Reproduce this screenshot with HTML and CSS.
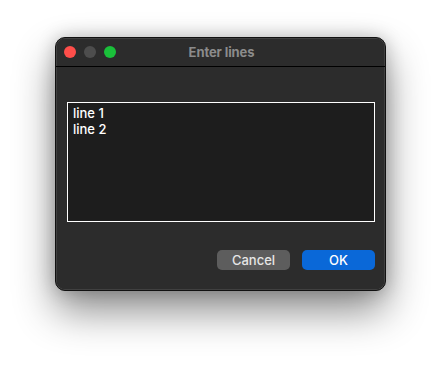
FILE: index.html
```html
<!DOCTYPE html>
<html>
<head>
<meta charset="utf-8">
<link rel="stylesheet" href="styles.css">
</head>
<body>
<div class="window">
  <div class="titlebar">
    <div class="lights">
      <span class="light red"></span>
      <span class="light gray"></span>
      <span class="light green"></span>
    </div>
    <div class="title">Enter lines</div>
  </div>
  <div class="content">
    <div class="textarea">
      <div>line 1</div>
      <div>line 2</div>
    </div>
    <div class="buttons">
      <div class="btn cancel">Cancel</div>
      <div class="btn ok">OK</div>
    </div>
  </div>
</div>
</body>
</html>
```
FILE: styles.css
```css
html, body {
  margin: 0;
  padding: 0;
  background: #ffffff;
  width: 442px;
  height: 365px;
  overflow: hidden;
}
body {
  font-family: Inter, "Liberation Sans", sans-serif;
  padding-top: 37px;
  padding-left: 55px;
  box-sizing: border-box;
}
.window {
  width: 331px;
  height: 254px;
  box-sizing: border-box;
  background: #2c2c2c;
  border: 1px solid #111;
  border-radius: 10px;
  box-shadow: 0 0 0 0.5px #555 inset, 0 20px 40px rgba(0,0,0,0.45), 0 0 18px rgba(0,0,0,0.22);
  display: flex;
  flex-direction: column;
  overflow: hidden;
}
.titlebar {
  height: 28px;
  border-bottom: 1px solid #000;
  display: flex;
  align-items: center;
  position: relative;
  flex-shrink: 0;
}
.lights {
  display: flex;
  gap: 8px;
  padding-left: 8px;
}
.light {
  width: 12px;
  height: 12px;
  border-radius: 50%;
  display: block;
}
.red { background: #fe4e4a; }
.gray { background: #4d4d4d; }
.green { background: #1ac03a; }
.title {
  position: absolute;
  left: 0;
  right: 0;
  top: 0;
  bottom: 0;
  display: flex;
  align-items: center;
  justify-content: center;
  color: #8b8b8b;
  font-weight: 700;
  font-size: 13px;
  letter-spacing: -0.1px;
  padding-left: 2px;
}
.content {
  padding: 35px 10px 0 11px;
  display: flex;
  flex-direction: column;
}
.textarea {
  width: 308px;
  height: 120px;
  box-sizing: border-box;
  background: #1d1d1d;
  border: 1px solid #ffffff;
  color: #ffffff;
  font-size: 13px;
  font-weight: 500;
  line-height: 16px;
  padding: 2px 5px;
}
.buttons {
  display: flex;
  justify-content: flex-end;
  gap: 12px;
  margin-top: 28px;
}
.btn {
  width: 73px;
  height: 20px;
  border-radius: 5px;
  display: flex;
  align-items: center;
  justify-content: center;
  font-size: 13px;
  font-weight: 500;
  color: #e6e6e6;
}
.cancel {
  background: #5d5d5d;
}
.ok {
  background: #0a68d8;
  color: #fff;
}
```
